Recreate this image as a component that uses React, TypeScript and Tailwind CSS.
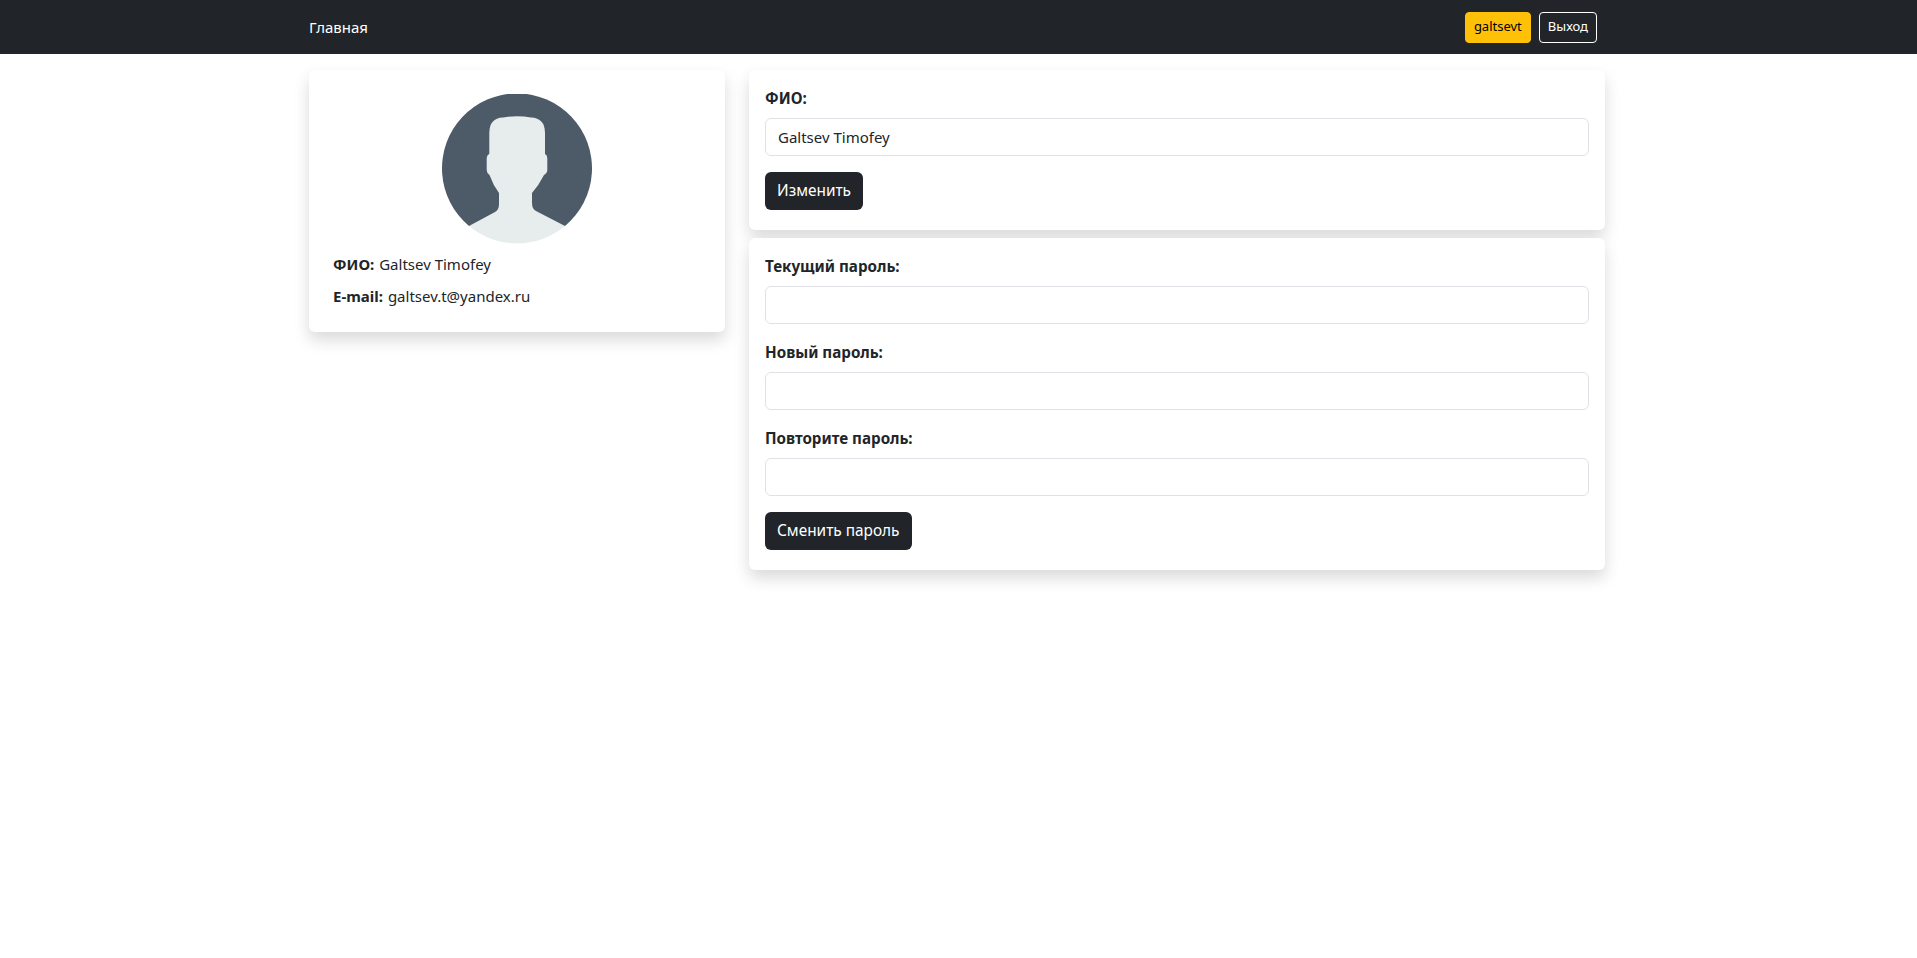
const font = "font-['Noto_Sans','Open_Sans',sans-serif]";

function Avatar() {
  return (
    <svg viewBox="0 0 150 150" className="block w-[150px] h-[150px] mx-auto">
      <path fill="#4d5b69" d="M27 132 A75 75 0 1 1 123 132 Z" />
      <path
        fill="#e7ecec"
        d="M27 132 L53 118 Q57 116 57 110 L57 99 Q51 91 47.5 81 Q44.7 79 44.7 76 L44.7 65 Q44.7 61 47.3 60 L47.3 39 Q47.3 24 61 23.5 Q75 21 89 23.5 Q103 24 103 39 L103 60 Q105.3 61 105.3 65 L105.3 76 Q105.3 79 102 81 Q97 91 90 99 L90 109 Q90 115 94 117 L123 132 A75 75 0 0 1 27 132 Z"
      />
    </svg>
  );
}

function Field({ label, value }: { label: string; value?: string }) {
  return (
    <div className="mb-4">
      <label className="block mb-2 font-bold text-[15.2px] leading-6">{label}</label>
      <input
        type="text"
        defaultValue={value}
        className="block w-full h-[38px] px-3 border border-[#dee2e6] rounded-md bg-white text-[#212529] leading-6 outline-none"
      />
    </div>
  );
}

function DarkButton({ children }: { children: string }) {
  return (
    <button className="block h-[38px] px-3 rounded-md bg-[#212529] text-white text-[15.4px] leading-6">
      {children}
    </button>
  );
}

export default function App() {
  return (
    <div className={`min-h-[958px] bg-white text-[#212529] text-[15px] ${font}`}>
      <nav className="h-[54px] bg-[#212529]">
        <div className="w-[1296px] ml-[309px] pr-2 h-full flex items-center justify-between">
          <a className="text-white">Главная</a>
          <div className="flex gap-2">
            <button className="h-[31px] px-2 rounded bg-[#ffc107] text-black text-[13px] border border-[#ffc107]">
              galtsevt
            </button>
            <button className="h-[31px] px-2 rounded border border-white text-white text-[13px]">
              Выход
            </button>
          </div>
        </div>
      </nav>
      <main className="w-[1296px] ml-[309px] pt-4 flex gap-6 items-start">
        <section className="w-[416px] shrink-0 p-6 bg-white rounded-md shadow-[0_8px_16px_rgba(0,0,0,0.15)]">
          <div className="mb-2">
            <Avatar />
          </div>
          <p className="mb-2 leading-6">
            <b>ФИО:</b> <span className="ml-px">Galtsev Timofey</span>
          </p>
          <p className="leading-6">
            <b>E-mail:</b> <span className="ml-px">galtsev.t@yandex.ru</span>
          </p>
        </section>
        <div className="flex-1 min-w-0">
          <section className="mb-2 px-4 pt-4 pb-5 bg-white rounded-md shadow-[0_8px_16px_rgba(0,0,0,0.15)]">
            <Field label="ФИО:" value="Galtsev Timofey" />
            <DarkButton>Изменить</DarkButton>
          </section>
          <section className="px-4 pt-4 pb-5 bg-white rounded-md shadow-[0_8px_16px_rgba(0,0,0,0.15)]">
            <Field label="Текущий пароль:" />
            <Field label="Новый пароль:" />
            <Field label="Повторите пароль:" />
            <DarkButton>Сменить пароль</DarkButton>
          </section>
        </div>
      </main>
    </div>
  );
}
